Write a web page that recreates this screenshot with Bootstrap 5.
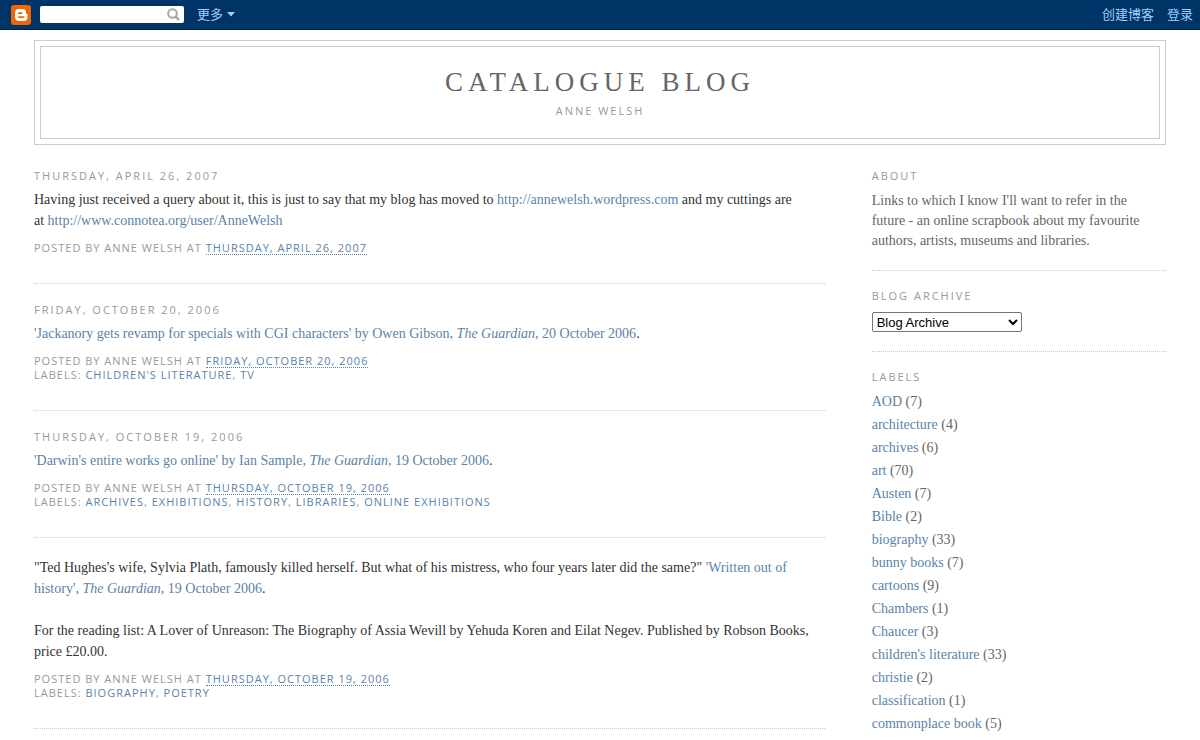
<!DOCTYPE html>
<html lang="en">
<head>
<meta charset="utf-8">
<meta name="viewport" content="width=device-width, initial-scale=1">
<title>Catalogue Blog</title>
<link href="https://cdn.jsdelivr.net/npm/bootstrap@5.3.0/dist/css/bootstrap.min.css" rel="stylesheet">
<style>
body { font-family: Georgia, "Liberation Serif", serif; font-size: 14px; line-height: 21px; color: #333; background: #fff; }
a { color: #5a83a8; text-decoration: none; }
.top-bar { height: 30px; background: #036; border-bottom: 1px solid #024; font: 13px/20px "Liberation Sans", "Noto Sans CJK SC", sans-serif; padding: 0 7px 0 11px; }
.top-bar a, .top-bar button { color: #9bd0ff; }
.top-links { gap: 13px; }
.search-box { width: 144px; height: 17px; background: #fff; border-radius: 2px; margin: 0 13px 0 9px; padding-right: 4px; }
.search-box input { min-width: 0; outline: 0; font-size: 12px; }
.page-wrap { padding: 10px 34px 0; }
.title-frame { border: 1px solid #ccc; padding: 5px; margin-bottom: 24px; }
.title-inner { border: 1px solid #ccc; padding: 17px 0 16px; }
.blog-title { font-size: 27px; line-height: 36px; letter-spacing: 5px; font-weight: 400; color: #666; }
.caps { font-family: "Trebuchet MS", "Open Sans", sans-serif; font-size: 11px; line-height: 14px; text-transform: uppercase; color: #999; font-weight: 400; letter-spacing: 1px; }
.caps-title { letter-spacing: 2px; margin-bottom: 6px; }
.tagline { padding: 4px 0; }
.columns { gap: 47px; }
.side-col { flex: 0 0 26%; color: #666; }
.post { border-bottom: 1px dotted #ccc; padding-bottom: 28px; margin-bottom: 19px; }
.post p { margin-bottom: 21px; }
.post p:last-of-type { margin-bottom: 10px; }
.stamp { border-bottom: 1px dotted #5a83a8; line-height: 12px; display: inline-block; }
.widget { border-bottom: 1px dotted #ccc; padding-bottom: 19px; margin-bottom: 18px; }
.about-text { line-height: 20px; padding: 2px 12px 0 0; }
.archive-select { display: block; width: 150px; height: 20px; margin-top: 9px; padding: 0; border: 1px solid #767676; border-radius: 2px; background: #fff; color: #000; font: 13px "Liberation Sans", sans-serif; }
.label-list li { line-height: 23px; }
</style>
</head>
<body>
<nav class="top-bar d-flex align-items-center" aria-label="Blogger">
  <a href="#" class="d-flex" aria-label="Blogger">
    <svg width="20" height="20" viewBox="0 0 20 20"><rect width="20" height="20" rx="3" fill="#ee6605"/><path fill="#fff" fill-rule="evenodd" d="M8 4h3.500a3.500 3.500 0 0 1 3.500 3.500c0 .8.200 1.200.8 1.200.5 0 .7.300.7.800V12a4 4 0 0 1-4 4H8a4 4 0 0 1-4-4V8a4 4 0 0 1 4-4zm-.2 3.200a.9.900 0 0 0 0 1.800h2.900a.9.900 0 0 0 0-1.800zm0 4a.9.900 0 0 0 0 1.800h4.700a.9.900 0 0 0 0-1.800z"/></svg>
  </a>
  <form class="search-box d-flex align-items-center" role="search">
    <input type="text" class="border-0 bg-transparent flex-grow-1 p-0 h-100" aria-label="Search">
    <button type="submit" class="border-0 bg-transparent p-0 d-flex" aria-label="Search"><svg width="13" height="13" viewBox="0 0 13 13" fill="none" stroke="#aaa" stroke-width="2"><circle cx="5.500" cy="5.500" r="4.300"/><path d="M8.600 8.600L12 12" stroke-width="2.500"/></svg></button>
  </form>
  <button type="button" class="border-0 bg-transparent p-0 d-flex align-items-center gap-1">更多 <svg width="8" height="5" viewBox="0 0 8 5"><path d="M0 0h8L4 4.500z" fill="#9bd0ff"/></svg></button>
  <div class="top-links ms-auto d-flex"><a href="#">创建博客</a><a href="#">登录</a></div>
</nav>
<div class="page-wrap">
  <header class="title-frame">
    <div class="title-inner text-center">
      <h1 class="blog-title m-0">CATALOGUE BLOG</h1>
      <div class="caps caps-title tagline m-0">Anne Welsh</div>
    </div>
  </header>
  <div class="columns d-flex">
    <main class="flex-grow-1">
      <article class="post">
        <h2 class="caps caps-title">Thursday, April 26, 2007</h2>
        <p>Having just received a query about it, this is just to say that my blog has moved to <a href="#">http://annewelsh.wordpress.com</a> and my cuttings are <span class="text-nowrap">at <a href="#">http://www.connotea.org/user/AnneWelsh</a></span></p>
        <div class="caps">Posted by Anne Welsh at <a href="#" class="stamp">Thursday, April 26, 2007</a></div>
      </article>
      <article class="post">
        <h2 class="caps caps-title">Friday, October 20, 2006</h2>
        <p><a href="#">'Jackanory gets revamp for specials with CGI characters' by Owen Gibson, <em>The Guardian</em>, 20 October 2006</a>.</p>
        <div class="caps">Posted by Anne Welsh at <a href="#" class="stamp">Friday, October 20, 2006</a></div>
        <div class="caps">Labels: <a href="#">children's literature</a>, <a href="#">TV</a></div>
      </article>
      <article class="post">
        <h2 class="caps caps-title">Thursday, October 19, 2006</h2>
        <p><a href="#">'Darwin's entire works go online' by Ian Sample, <em>The Guardian</em>, 19 October 2006</a>.</p>
        <div class="caps">Posted by Anne Welsh at <a href="#" class="stamp">Thursday, October 19, 2006</a></div>
        <div class="caps">Labels: <a href="#">archives</a>, <a href="#">exhibitions</a>, <a href="#">history</a>, <a href="#">libraries</a>, <a href="#">online exhibitions</a></div>
      </article>
      <article class="post">
        <p>"Ted Hughes's wife, Sylvia Plath, famously killed herself. But what of his mistress, who four years later did the same?" <a href="#">'Written out of history', <em>The Guardian</em>, 19 October 2006</a>.</p>
        <p>For the reading list: A Lover of Unreason: The Biography of Assia Wevill by Yehuda Koren and Eilat Negev. Published by Robson Books, price £20.00.</p>
        <div class="caps">Posted by Anne Welsh at <a href="#" class="stamp">Thursday, October 19, 2006</a></div>
        <div class="caps">Labels: <a href="#">biography</a>, <a href="#">poetry</a></div>
      </article>
    </main>
    <aside class="side-col">
      <section class="widget">
        <h2 class="caps caps-title">About</h2>
        <div class="about-text">Links to which I know I'll want to refer in the future - an online scrapbook about my favourite authors, artists, museums and libraries.</div>
      </section>
      <section class="widget">
        <h2 class="caps caps-title"><label for="archive">Blog Archive</label></h2>
        <select id="archive" class="archive-select"><option>Blog Archive</option></select>
      </section>
      <section>
        <h2 class="caps caps-title">Labels</h2>
        <ul class="label-list list-unstyled m-0">
          <li><a href="#">AOD</a> (7)</li>
          <li><a href="#">architecture</a> (4)</li>
          <li><a href="#">archives</a> (6)</li>
          <li><a href="#">art</a> (70)</li>
          <li><a href="#">Austen</a> (7)</li>
          <li><a href="#">Bible</a> (2)</li>
          <li><a href="#">biography</a> (33)</li>
          <li><a href="#">bunny books</a> (7)</li>
          <li><a href="#">cartoons</a> (9)</li>
          <li><a href="#">Chambers</a> (1)</li>
          <li><a href="#">Chaucer</a> (3)</li>
          <li><a href="#">children's literature</a> (33)</li>
          <li><a href="#">christie</a> (2)</li>
          <li><a href="#">classification</a> (1)</li>
          <li><a href="#">commonplace book</a> (5)</li>
          <li><a href="#">crime novels</a> (1)</li>
        </ul>
      </section>
    </aside>
  </div>
</div>
<script src="https://cdn.jsdelivr.net/npm/bootstrap@5.3.0/dist/js/bootstrap.bundle.min.js"></script>
</body>
</html>
